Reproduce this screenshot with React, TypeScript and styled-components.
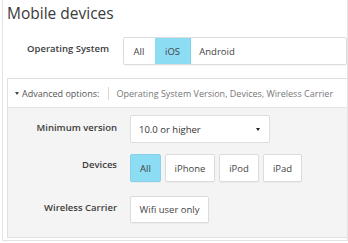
import React from 'react';
import styled, { createGlobalStyle } from 'styled-components';

const Global = createGlobalStyle`
  html, body {
    margin: 0;
    padding: 0;
    background: #fff;
  }
  body {
    font-family: "Open Sans", "Liberation Sans", sans-serif;
    color: #333;
  }
`;

const Frame = styled.div`
  box-sizing: border-box;
  margin-left: 2px;
  width: 346px;
  height: 241px;
  border: 1px solid #e3e3e3;
  border-top: none;
  padding: 0 0 2px 4px;
  display: flex;
  flex-direction: column;
  overflow: hidden;
`;

const Title = styled.h2`
  margin: 3px 0 0 0;
  font-size: 15.5px;
  line-height: 20px;
  font-weight: 400;
  color: #3a3a3a;
`;

const FormRow = styled.div<{ $labelWidth: number; $gap: number }>`
  display: grid;
  grid-template-columns: ${p => p.$labelWidth}px auto;
  column-gap: ${p => p.$gap}px;
  align-items: start;
`;

const Label = styled.div<{ $top: number }>`
  text-align: right;
  font-size: 9.5px;
  font-weight: 600;
  color: #3d3d3d;
  padding-top: ${p => p.$top}px;
  white-space: nowrap;
`;

const Group = styled.div`
  display: inline-flex;
  border: 1px solid #dcdcdc;
  border-radius: 2px;
  background: #fff;
  box-shadow: 0 1px 1px rgba(0, 0, 0, 0.04);
  overflow: hidden;
  height: 28px;
  box-sizing: border-box;
`;

const Segment = styled.div<{ $active?: boolean; $w: number }>`
  width: ${p => p.$w}px;
  display: flex;
  align-items: center;
  justify-content: center;
  font-size: 9.5px;
  color: #444;
  background: ${p => (p.$active ? '#8cdcf3' : '#fff')};
  border-right: 1px solid ${p => (p.$active ? '#7fd0e8' : 'transparent')};
  box-sizing: border-box;
`;

const Panel = styled.div`
  margin-top: 13px;
  border: 1px solid #e0e0e0;
  border-right: none;
  display: flex;
  flex-direction: column;
  flex: 1;
`;

const PanelHead = styled.div`
  height: 28px;
  display: flex;
  align-items: center;
  background: #fff;
  border-bottom: 1px solid #e6e6e6;
  font-size: 9px;
  color: #555;
  padding-left: 7px;
  white-space: nowrap;
  overflow: hidden;
`;

const Caret = styled.span`
  display: inline-block;
  width: 0;
  height: 0;
  border-left: 2.5px solid transparent;
  border-right: 2.5px solid transparent;
  border-top: 3px solid #444;
  margin-right: 3px;
`;

const Divider = styled.span`
  flex: none;
  width: 1px;
  height: 13px;
  background: #d6d6d6;
  margin: 0 7px 0 9px;
`;

const Summary = styled.span`
  color: #777;
`;

const PanelBody = styled.div`
  flex: 1;
  background: #f4f4f4;
  padding: 7px 0 0 1px;
  display: flex;
  flex-direction: column;
`;

const Select = styled.div`
  box-sizing: border-box;
  width: 140px;
  height: 28px;
  background: #fff;
  border: 1px solid #dedede;
  border-radius: 2px;
  display: flex;
  align-items: center;
  justify-content: space-between;
  padding: 0 9px 0 8px;
  font-size: 9.5px;
  color: #333;
`;

const SelectCaret = styled(Caret)`
  margin-right: 0;
  border-top-color: #222;
`;

const Buttons = styled.div`
  display: flex;
  gap: 4px;
`;

const Btn = styled.div<{ $active?: boolean; $w: number; $h?: number }>`
  box-sizing: border-box;
  width: ${p => p.$w}px;
  height: ${p => p.$h ?? 28}px;
  display: flex;
  align-items: center;
  justify-content: center;
  border: 1px solid ${p => (p.$active ? '#86d2e8' : '#dcdcdc')};
  border-radius: 2px;
  background: ${p => (p.$active ? '#8cdcf3' : '#fff')};
  box-shadow: 0 1px 1px rgba(0, 0, 0, 0.04);
  font-size: 9.5px;
  color: #444;
`;

export default function App() {
  return (
    <>
      <Global />
      <Frame>
        <Title>Mobile devices</Title>
        <FormRow $labelWidth={102} $gap={14} style={{ marginTop: 14 }}>
          <Label $top={5}>Operating System</Label>
          <Group>
            <Segment $w={31}>All</Segment>
            <Segment $w={36} $active>iOS</Segment>
            <Segment $w={53}>Android</Segment>
          </Group>
        </FormRow>
        <Panel>
          <PanelHead>
            <Caret />
            Advanced options:
            <Divider />
            <Summary>Operating System Version, Devices, Wireless Carrier</Summary>
          </PanelHead>
          <PanelBody>
            <FormRow $labelWidth={108} $gap={13}>
              <Label $top={6}>Minimum version</Label>
              <Select>
                10.0 or higher
                <SelectCaret />
              </Select>
            </FormRow>
            <FormRow $labelWidth={108} $gap={13} style={{ marginTop: 11 }}>
              <Label $top={4}>Devices</Label>
              <Buttons>
                <Btn $w={31} $active>All</Btn>
                <Btn $w={50}>iPhone</Btn>
                <Btn $w={40}>iPod</Btn>
                <Btn $w={39}>iPad</Btn>
              </Buttons>
            </FormRow>
            <FormRow $labelWidth={108} $gap={13} style={{ marginTop: 14 }}>
              <Label $top={5}>Wireless Carrier</Label>
              <Buttons>
                <Btn $w={79} $h={27}>Wifi user only</Btn>
              </Buttons>
            </FormRow>
          </PanelBody>
        </Panel>
      </Frame>
    </>
  );
}
